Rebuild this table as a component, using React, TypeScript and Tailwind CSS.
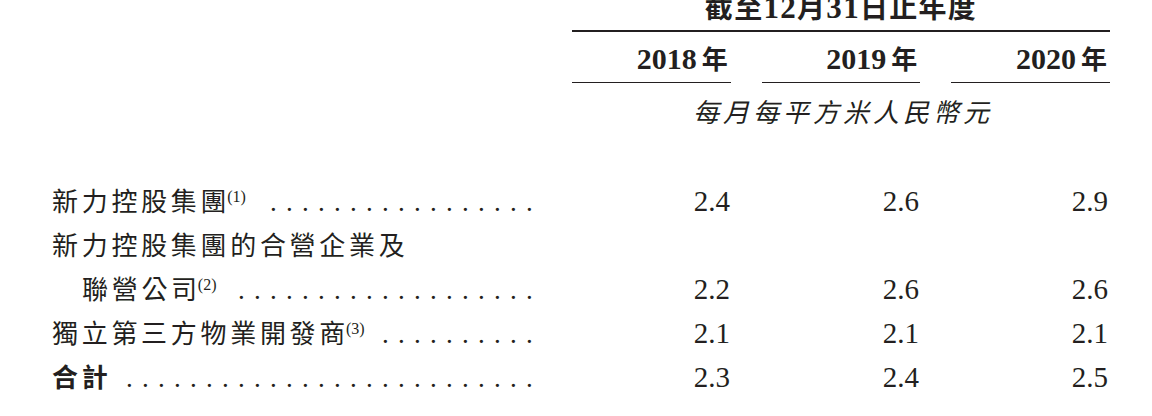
const CJK = "font-['Noto_Sans_CJK_TC',sans-serif]"
const SERIF = "font-['Liberation_Serif','Noto_Sans_CJK_TC',serif]"

interface Row {
  label: string
  note?: string
  indent?: boolean
  bold?: boolean
  dots?: number
  values?: string[]
}

const ROWS: Row[] = [
  { label: '新力控股集團', note: '(1)', dots: 17, values: ['2.4', '2.6', '2.9'] },
  { label: '新力控股集團的合營企業及' },
  { label: '聯營公司', note: '(2)', indent: true, dots: 19, values: ['2.2', '2.6', '2.6'] },
  { label: '獨立第三方物業開發商', note: '(3)', dots: 10, values: ['2.1', '2.1', '2.1'] },
  { label: '合計', bold: true, dots: 26, values: ['2.3', '2.4', '2.5'] },
]

const YEARS = ['2018', '2019', '2020']

export default function App() {
  return (
    <div className={`w-[1152px] h-[416px] bg-white overflow-hidden text-[#231f20] ${CJK}`}>
      <div className="ml-[572px] w-[538px]">
        <div className="h-[30px] flex items-end justify-center pb-[7px]">
          <span className="text-[28px] leading-none font-bold tracking-[1.3px] whitespace-nowrap">
            截至<span className={`${SERIF} text-[31px]`}>12</span>月<span className={`${SERIF} text-[31px]`}>31</span>日止年度
          </span>
        </div>
        <div className="h-[1.5px] bg-[#231f20]" />
        <div className="grid grid-cols-3 gap-x-[31px]">
          {YEARS.map((y) => (
            <div key={y} className="h-[51px] border-b-[1.5px] border-[#231f20] flex items-end justify-end pb-[8px] pr-[3px]">
              <span className="leading-none font-bold whitespace-nowrap">
                <span className={`${SERIF} text-[30px]`}>{y}</span>
                <span className="text-[26px] ml-[5px]">年</span>
              </span>
            </div>
          ))}
        </div>
        <div className="mt-[15px] text-center text-[26px] leading-none italic tracking-[4px] pl-[4px]">
          每月每平方米人民幣元
        </div>
      </div>

      <div className="mt-[54px] pl-[52px]">
        {ROWS.map((r) => (
          <div key={r.label} className="h-[44px] leading-[44px] flex items-baseline">
            <div className="w-[482px] flex items-baseline whitespace-nowrap">
              <span
                className={`text-[26px] tracking-[3.7px] ${r.indent ? 'pl-[30px]' : ''} ${r.bold ? 'font-bold' : ''}`}
              >
                {r.label}
              </span>
              {r.note && (
                <span className={`${SERIF} text-[16px] relative -top-[9px] -ml-[3px]`}>{r.note}</span>
              )}
              {r.dots && (
                <span className={`ml-auto ${SERIF} text-[27px] tracking-[1.25px]`}>{' .'.repeat(r.dots)}</span>
              )}
            </div>
            {r.values && (
              <div className="ml-[38px] grid grid-cols-[158px_158px_158px] gap-x-[31px]">
                {r.values.map((v, i) => (
                  <span key={i} className={`${SERIF} text-[29px] text-right`}>
                    {v}
                  </span>
                ))}
              </div>
            )}
          </div>
        ))}
      </div>
    </div>
  )
}
